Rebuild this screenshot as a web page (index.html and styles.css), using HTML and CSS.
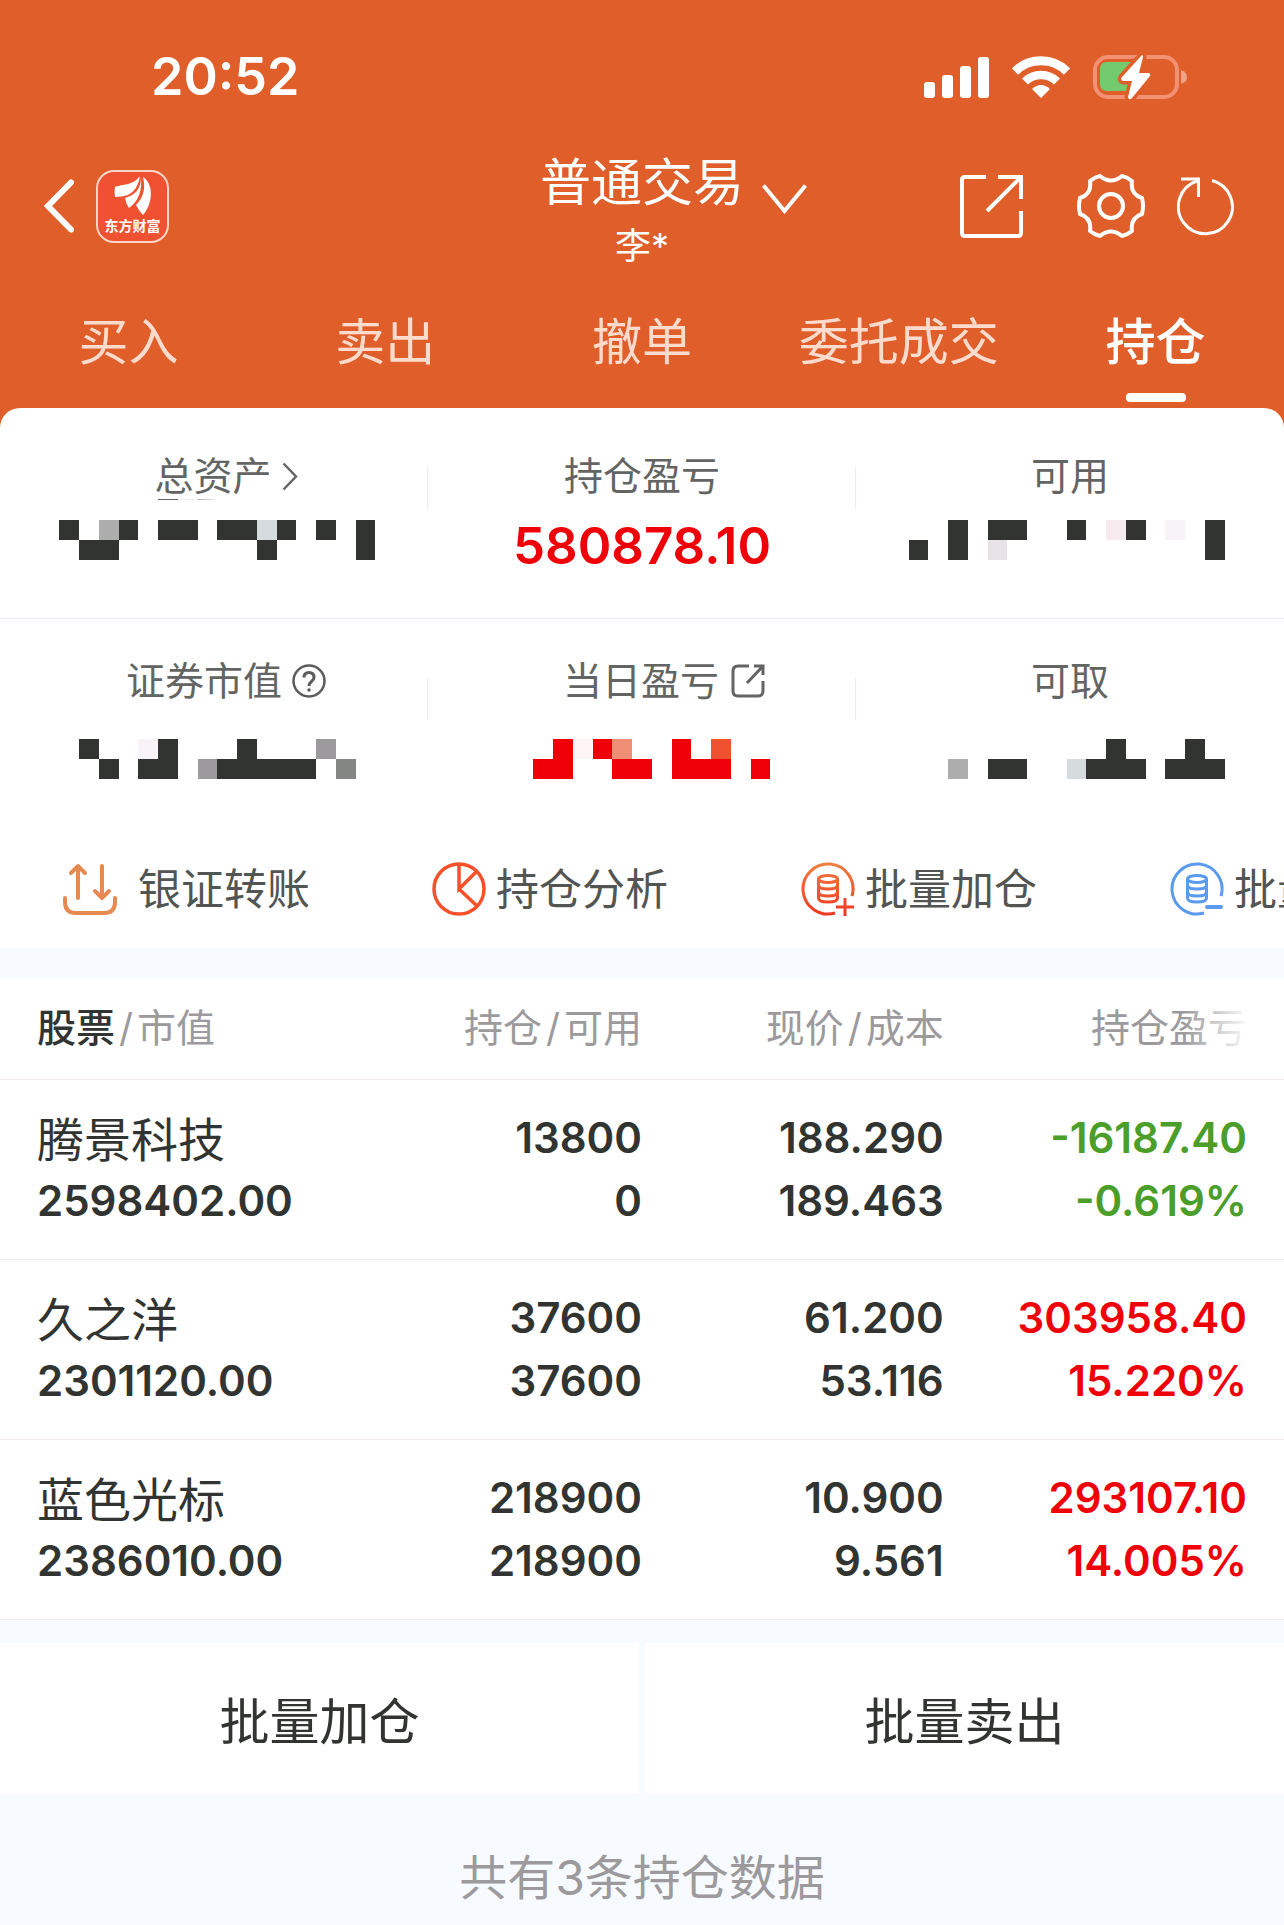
FILE: index.html
```
<!DOCTYPE html>
<html lang="zh-CN">
<head>
    <meta charset="UTF-8">
    <meta name="viewport" content="width=device-width, initial-scale=1.0">
    <title>普通交易</title>
    <link rel="stylesheet" href="styles.css">
</head>
<body>
    <div class="top">
        <!-- 状态栏 -->
        <div class="status-bar">
            <span class="time">20:52</span>
            <div class="status-icons">
                <svg width="65" height="41" viewBox="0 0 65 41" fill="#fff">
                    <rect x="0" y="25" width="11" height="16" rx="3"/>
                    <rect x="18" y="18" width="11" height="23" rx="3"/>
                    <rect x="36" y="9" width="11" height="32" rx="3"/>
                    <rect x="54" y="0" width="11" height="41" rx="3"/>
                </svg>
                <svg width="58" height="42" viewBox="0 0 58 42">
                    <path d="M3 15.500A37 37 0 0 1 55 15.500" fill="none" stroke="#fff" stroke-width="9"/>
                    <path d="M13 25.500A23 23 0 0 1 45 25.500" fill="none" stroke="#fff" stroke-width="8.500"/>
                    <path d="M29 42L20 33Q29 25 38 33Z" fill="#fff"/>
                </svg>
                <svg width="95" height="45" viewBox="0 0 95 45">
                    <rect x="2" y="2" width="82" height="40" rx="13" fill="none" stroke="#f29174" stroke-width="4"/>
                    <path d="M88 15Q94 17 94 22.500Q94 27 88 29Z" fill="#f2a584"/>
                    <path d="M14 7H44V36H14Q7 36 7 29V14Q7 7 14 7Z" fill="#73cb6e"/>
                    <path d="M49 0L29 22Q27 25 30 26H39L35 42Q36 46 39 43L57 21Q58 18 55 18H46L50 2Q50 0 49 0Z" fill="#fff" stroke="#df5e29" stroke-width="7" paint-order="stroke"/>
                </svg>
            </div>
        </div>

        <!-- 标题栏 -->
        <header class="header">
            <div class="header-left">
                <button class="icon-btn" aria-label="返回">
                    <svg width="30" height="54" viewBox="0 0 30 54" fill="none" stroke="#fff" stroke-width="6" stroke-linecap="round">
                        <path d="M27 3.500L4 27L27 50.500"/>
                    </svg>
                </button>
                <div class="logo">
                    <svg width="38" height="40" viewBox="0 0 38 40" fill="#fff">
                        <path d="M26 0Q24 14 14 19Q8 21 1 21Q0 16 1 11Q3 10 9 9Q20 8 26 0Z"/>
                        <path d="M27 1C27 13 21 19 11 22Q12 28 15 32Q29 22 27 1Z"/>
                        <path d="M29 1C32 13 29 22 22 29Q25 35 29 39C40 26 39 7 29 1Z"/>
                    </svg>
                    <span>东方财富</span>
                </div>
            </div>
            <div class="title">
                <h1>普通交易</h1>
                <p>李*</p>
            </div>
            <div class="header-right">
                <button class="icon-btn switch" aria-label="切换账户">
                    <svg width="45" height="30" viewBox="0 0 45 30" fill="none" stroke="#fff" stroke-width="4">
                        <path d="M1.500 1.500L22.500 27L43.500 1.500"/>
                    </svg>
                </button>
                <button class="icon-btn share" aria-label="分享">
                    <svg width="63" height="63" viewBox="0 0 63 63" fill="none" stroke="#fff" stroke-width="4">
                        <path d="M26 2H5Q2 2 2 5V58Q2 61 5 61H58Q61 61 61 58V36"/>
                        <path d="M38 2H61V24M60 3L27 36"/>
                    </svg>
                </button>
                <button class="icon-btn gear" aria-label="设置">
                    <svg width="68" height="66" viewBox="0 0 68 66" fill="none" stroke="#fff" stroke-width="4" stroke-linejoin="round">
                        <path d="M23 3Q34 12 45 3Q50 4 55 8Q53 21 65 25Q67 33 65 41Q53 45 55 58Q50 62 45 63Q34 54 23 63Q18 62 13 58Q15 45 3 41Q1 33 3 25Q15 21 13 8Q18 4 23 3Z"/>
                        <circle cx="34" cy="33" r="12"/>
                    </svg>
                </button>
                <button class="icon-btn" aria-label="刷新">
                    <svg width="58" height="60" viewBox="0 0 58 60" fill="none" stroke="#fff" stroke-width="3">
                        <path d="M35 4.500A27 27 0 1 1 20 5"/>
                        <path d="M4 3H21.500V21"/>
                    </svg>
                </button>
            </div>
        </header>

        <nav class="tabs">
            <a href="#">买入</a>
            <a href="#">卖出</a>
            <a href="#">撤单</a>
            <a href="#">委托成交</a>
            <a href="#" class="active">持仓</a>
        </nav>
    </div>

    <!-- 资产概览，隐藏的金额用马赛克 -->
    <section class="summary">
        <div class="cell">
            <div class="label label-asset">总资产
                <svg width="16" height="29" viewBox="0 0 16 29" fill="none" stroke="#636563" stroke-width="2.500"><path d="M1.500 1.500L14 14.500L1.500 27.500"/></svg>
                <i class="residue"></i>
            </div>
            <svg class="mosaic" height="40" viewBox="0 0 428 40">
                <path fill="#313431" d="M59 0h20v20h-20zM119 0h19v20h-19zM158 0h40v20h-40zM217 0h40v20h-40zM277 0h19v20h-19zM316 0h20v20h-20zM356 0h19v40h-19zM79 20h40v20h-40zM257 20h20v20h-20z"/>
                <path fill="#adadad" d="M99 0h20v20h-20z"/>
                <path fill="#d6dbde" d="M257 0h20v20h-20z"/>
            </svg>
        </div>
        <div class="cell">
            <div class="label">持仓盈亏</div>
            <div class="profit">580878.10</div>
        </div>
        <div class="cell">
            <div class="label">可用</div>
            <svg class="mosaic" height="40" viewBox="0 0 428 40">
                <path fill="#313431" d="M53 20h19v20h-19zM92 0h20v40h-20zM132 0h39v20h-39zM211 0h19v20h-19zM270 0h20v20h-20zM349 0h20v40h-20z"/>
                <path fill="#e7e3e7" d="M132 20h19v20h-19z"/>
                <path fill="#f7ebef" d="M250 0h20v20h-20z"/>
                <path fill="#f7f3f7" d="M309 0h20v20h-20z"/>
            </svg>
        </div>
        <div class="cell">
            <div class="label label-value">证券市值
                <svg width="34" height="34" viewBox="0 0 34 34" fill="none" stroke="#5a5d5a" stroke-width="2.500">
                    <circle cx="17" cy="17" r="15.500"/>
                    <path d="M12 13.500Q12 8.500 17 8.500T22 13.500Q22 15.500 19.500 17.500T17 22" stroke-width="3"/>
                    <circle cx="17" cy="26" r="1.800" fill="#5a5d5a" stroke="none"/>
                </svg>
            </div>
            <svg class="mosaic" height="40" viewBox="0 0 428 40">
                <path fill="#313431" d="M79 0h20v20h-20zM158 0h20v20h-20zM237 0h20v20h-20zM99 20h20v20h-20zM138 20h40v20h-40zM217 20h99v20h-99z"/>
                <path fill="#f7f3f7" d="M138 0h20v20h-20z"/>
                <path fill="#9c9a9c" d="M316 0h20v20h-20zM198 20h19v20h-19z"/>
                <path fill="#848684" d="M336 20h20v20h-20z"/>
            </svg>
        </div>
        <div class="cell">
            <div class="label label-today">当日盈亏
                <svg width="34" height="34" viewBox="0 0 34 34" fill="none" stroke="#636563" stroke-width="3">
                    <path d="M18 2H7Q2 2 2 7V27Q2 32 7 32H27Q32 32 32 27V17"/>
                    <path d="M23 2H32V11M32 2L16 19"/>
                </svg>
            </div>
            <svg class="mosaic" height="40" viewBox="0 0 428 40">
                <path fill="#ef0008" d="M125 0h20v20h-20zM165 0h19v20h-19zM244 0h19v20h-19zM105 20h40v20h-40zM184 20h40v20h-40zM244 20h59v20h-59zM323 20h19v20h-19z"/>
                <path fill="#fff5f7" d="M145 0h20v20h-20z"/>
                <path fill="#f08e75" d="M184 0h20v20h-20z"/>
                <path fill="#ef5131" d="M283 0h20v20h-20z"/>
            </svg>
        </div>
        <div class="cell">
            <div class="label">可取</div>
            <svg class="mosaic" height="40" viewBox="0 0 428 40">
                <path fill="#313431" d="M250 0h20v20h-20zM329 0h20v20h-20zM132 20h39v20h-39zM230 20h60v20h-60zM309 20h60v20h-60z"/>
                <path fill="#adadad" d="M92 20h20v20h-20z"/>
                <path fill="#d6dbde" d="M211 20h19v20h-19z"/>
            </svg>
        </div>
    </section>

    <!-- 快捷入口 -->
    <nav class="shortcuts">
        <a href="#">
            <svg class="transfer" width="54" height="54" viewBox="0 0 54 54" fill="none" stroke="#e78a52" stroke-width="4" stroke-linecap="round" stroke-linejoin="round">
                <path d="M15 36V4M8 11L15 4L22 11M39 4V36M32 29L39 36L46 29M2 36V40Q2 51 13 51H41Q52 51 52 40V36"/>
            </svg>
            银证转账
        </a>
        <a href="#">
            <svg width="54" height="54" viewBox="0 0 54 54" fill="none" stroke="#f7512c" stroke-width="3.500">
                <circle cx="27" cy="27" r="25"/>
                <path d="M27 2V27L45 9M27 27L45 44"/>
            </svg>
            持仓分析
        </a>
        <a href="#">
            <svg width="54" height="54" viewBox="0 0 54 54" fill="none" stroke="url(#warm)" stroke-width="3">
                <defs>
                    <linearGradient id="warm" gradientUnits="userSpaceOnUse" x1="0" y1="0" x2="0" y2="54">
                        <stop offset="0" stop-color="#f08040"/>
                        <stop offset="1" stop-color="#ef3520"/>
                    </linearGradient>
                </defs>
                <path d="M51 34A25 25 0 1 0 34 51"/>
                <ellipse cx="27" cy="17" rx="9.500" ry="3.500"/>
                <path d="M17.500 17V36Q17.500 40 27 40T36.500 36V17M17.500 23Q17.500 27 27 27T36.500 23M17.500 30Q17.500 34 27 34T36.500 30"/>
                <path d="M35 45H53M44 36V54"/>
            </svg>
            批量加仓
        </a>
        <a href="#">
            <svg width="54" height="54" viewBox="0 0 54 54" fill="none" stroke="#5a9aef" stroke-width="3">
                <path d="M51 34A25 25 0 1 0 34 51"/>
                <ellipse cx="27" cy="17" rx="9.500" ry="3.500"/>
                <path d="M17.500 17V36Q17.500 40 27 40T36.500 36V17M17.500 23Q17.500 27 27 27T36.500 23M17.500 30Q17.500 34 27 34T36.500 30"/>
                <path d="M37 45H51" stroke-width="4" stroke-linecap="round"/>
            </svg>
            批量卖出
        </a>
    </nav>

    <!-- 持仓列表 -->
    <table class="positions">
        <thead>
            <tr>
                <th><b>股票</b><span class="slash">/</span>市值</th>
                <th>持仓<span class="slash">/</span>可用</th>
                <th>现价<span class="slash">/</span>成本</th>
                <th class="fade">持仓盈亏</th>
            </tr>
        </thead>
        <tbody>
            <tr>
                <td><span class="name">腾景科技</span><span>2598402.00</span></td>
                <td><span>13800</span><span>0</span></td>
                <td><span>188.290</span><span>189.463</span></td>
                <td class="down"><span>-16187.40</span><span>-0.619%</span></td>
            </tr>
            <tr>
                <td><span class="name">久之洋</span><span>2301120.00</span></td>
                <td><span>37600</span><span>37600</span></td>
                <td><span>61.200</span><span>53.116</span></td>
                <td class="up"><span>303958.40</span><span>15.220%</span></td>
            </tr>
            <tr>
                <td><span class="name">蓝色光标</span><span>2386010.00</span></td>
                <td><span>218900</span><span>218900</span></td>
                <td><span>10.900</span><span>9.561</span></td>
                <td class="up"><span>293107.10</span><span>14.005%</span></td>
            </tr>
        </tbody>
    </table>

    <div class="actions">
        <button>批量加仓</button>
        <button>批量卖出</button>
    </div>
    <p class="count">共有3条持仓数据</p>
</body>
</html>
```

FILE: styles.css
```
* {
    box-sizing: border-box;
    margin: 0;
    padding: 0;
}
body {
    font-family: Inter, "Noto Sans CJK SC", sans-serif;
    background-color: #f7fbff;
    color: #313431;
    overflow-x: hidden;
}
a {
    text-decoration: none;
    color: inherit;
}
button {
    font-family: inherit;
    border: none;
    background: none;
    cursor: pointer;
}
svg {
    display: block;
    flex: none;
}

/* 顶部 */
.top {
    background-color: #df5e29;
    color: #fff;
    padding-bottom: 26px;
}
.status-bar {
    display: flex;
    justify-content: space-between;
    align-items: center;
    padding: 45px 96px 30px 151px;
}
.time {
    font-size: 52px;
    font-weight: 600;
    line-height: 64px;
}
.status-icons {
    display: flex;
    align-items: center;
    gap: 23px;
}
.header {
    display: grid;
    grid-template-columns: 1fr auto 1fr;
    align-items: center;
}
.header-left,
.header-right {
    display: flex;
    align-items: center;
}
.header-left {
    gap: 22px;
    padding-left: 44px;
}
.header-right {
    padding-right: 49px;
    padding-left: 18px;
}
.switch {
    margin-bottom: 14px;
}
.share {
    margin-left: auto;
}
.gear {
    margin: 0 32px 0 54px;
}
.logo {
    width: 73px;
    height: 73px;
    display: flex;
    flex-direction: column;
    align-items: center;
    justify-content: center;
    border: 2px solid #fbd5c8;
    border-radius: 18px;
    background-color: #ef5131;
    font-size: 14px;
    font-weight: 700;
    line-height: 20px;
}
.title {
    padding-top: 8px;
    text-align: center;
}
.title h1 {
    font-size: 51px;
    font-weight: 400;
    line-height: 72px;
}
.title p {
    font-size: 36px;
    line-height: 54px;
}
.tabs {
    display: flex;
    padding-top: 39px;
    margin-bottom: -20px;
}
.tabs a {
    flex: 1;
    display: flex;
    flex-direction: column;
    align-items: center;
    gap: 21px;
    font-size: 50px;
    line-height: 60px;
    color: #ffdbce;
    white-space: nowrap;
}
.tabs a::after {
    content: "";
    width: 60px;
    height: 9px;
    border-radius: 4px;
}
.tabs .active {
    color: #fff;
    font-weight: 500;
}
.tabs .active::after {
    background-color: #fff;
}

/* 资产概览 */
.summary {
    display: grid;
    grid-template-columns: 1fr 1fr 1fr;
    background: linear-gradient(#df5e29 20px, #fff 20px);
}
.cell {
    position: relative;
    height: 211px;
    padding-top: 44px;
    background-color: #fff;
    border-bottom: 1px solid #f7e7ec;
}
.cell:first-child {
    border-top-left-radius: 20px;
}
.cell:nth-child(3) {
    border-top-right-radius: 20px;
}
.cell:nth-child(n+4) {
    height: 192px;
    padding-top: 38px;
    border-bottom: none;
}
.cell:not(:nth-child(3n))::after {
    content: "";
    position: absolute;
    right: 0;
    top: 59px;
    width: 1px;
    height: 42px;
    background-color: #f7e7ec;
}
.label {
    position: relative;
    display: flex;
    justify-content: center;
    align-items: center;
    font-size: 39px;
    line-height: 48px;
    color: #636563;
}
.label-asset,
.label-value {
    gap: 10px;
    padding-left: 24px;
}
.label-today {
    gap: 12px;
    padding-left: 44px;
}
.residue {
    position: absolute;
    left: 158px;
    bottom: 0;
    width: 60px;
    height: 1px;
    background: linear-gradient(90deg, #636563 20px, #eee 20px, #eee 40px, #aaa 40px, #fff);
}
.mosaic {
    width: 100%;
    margin-top: 20px;
    shape-rendering: crispEdges;
}
.cell:nth-child(n+4) .mosaic {
    margin-top: 34px;
}
.profit {
    margin-top: 16px;
    font-size: 51px;
    font-weight: 600;
    line-height: 60px;
    text-align: center;
    color: #ef0008;
}

/* 快捷入口 */
.shortcuts {
    display: flex;
    height: 137px;
    padding: 48px 0 29px 63px;
    overflow: hidden;
    background-color: #fff;
}
.shortcuts a {
    flex: 0 0 369px;
    display: flex;
    align-items: center;
    gap: 10px;
    font-size: 43px;
    line-height: 60px;
    color: #525552;
    white-space: nowrap;
}
.shortcuts .transfer {
    margin-right: 11px;
}

/* 持仓列表 */
.positions {
    width: 100%;
    margin-top: 30px;
    table-layout: fixed;
    border-collapse: collapse;
    background-color: #fff;
}
.positions th {
    height: 101px;
    font-size: 39px;
    font-weight: 400;
    line-height: 48px;
    color: #9c9a9c;
    text-align: right;
    white-space: nowrap;
}
.positions th b {
    font-weight: 500;
    color: #313431;
}
.slash {
    padding: 0 4px;
}
.positions th,
.positions td {
    border-bottom: 1px solid #f3e9ed;
}
.positions th:first-child,
.positions td:first-child {
    width: 29%;
    padding-left: 37px;
    text-align: left;
}
.positions th:nth-child(2) {
    width: 21%;
}
.positions th:nth-child(3) {
    width: 23.5%;
}
.positions th:last-child,
.positions td:last-child {
    padding-right: 37px;
}
.positions td {
    height: 180px;
    font-size: 42px;
    font-weight: 600;
    line-height: 63px;
    text-align: right;
}
.positions td span {
    display: block;
}
.positions .name {
    padding-top: 4px;
    font-size: 47px;
    font-weight: 400;
    line-height: 59px;
}
.fade {
    position: relative;
}
.fade::after {
    content: "";
    position: absolute;
    top: 0;
    right: 0;
    width: 100px;
    height: 100%;
    background: linear-gradient(90deg, rgba(255, 255, 255, 0), rgba(255, 255, 255, 0.9) 60%);
}
.up {
    color: #ef0008;
}
.down {
    color: #4a9e29;
}

/* 底部 */
.actions {
    display: flex;
    gap: 6px;
    margin-top: 23px;
}
.actions button {
    flex: 1;
    height: 151px;
    background-color: #fff;
    color: #313431;
    font-size: 50px;
}
.count {
    margin-top: 54px;
    font-size: 48px;
    line-height: 60px;
    text-align: center;
    color: #9c9a9c;
}
```
